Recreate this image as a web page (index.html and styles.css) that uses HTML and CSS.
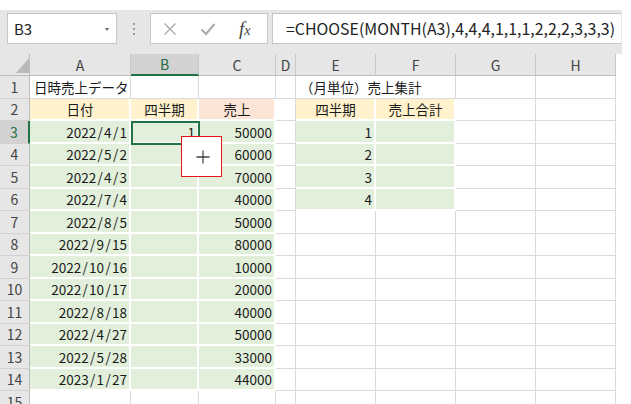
FILE: index.html
```html
<!DOCTYPE html>
<html lang="ja">
<head>
<meta charset="utf-8">
<link rel="stylesheet" href="styles.css">
</head>
<body>
<div class="top"></div>
<div class="fbar">
  <div class="namebox"><span class="nm">B3</span><span class="dd"></span></div>
  <div class="grip"><i></i><i></i><i></i></div>
  <div class="btns">
    <svg class="ic" width="14" height="14" viewBox="0 0 14 14"><path d="M1.5 1.5 L12.5 12.5 M12.5 1.5 L1.5 12.5" stroke="#a9a9a9" stroke-width="1.3" fill="none"/></svg>
    <svg class="ic" width="16" height="14" viewBox="0 0 16 14"><path d="M1.5 7.5 L6 12 L14.5 2" stroke="#a9a9a9" stroke-width="2" fill="none"/></svg>
    <span class="fx">f<span class="fxx">x</span></span>
  </div>
  <div class="formula">=CHOOSE(MONTH(A3),4,4,4,1,1,1,2,2,2,3,3,3)</div>
</div>
<div class="sheet">
  <div class="corner"><svg width="30" height="22" viewBox="0 0 30 22"><path d="M29 4 L29 19 L16 19 Z" fill="#b9b9b9"/></svg></div>
  <div class="h">A</div><div class="h sel">B</div><div class="h">C</div><div class="h">D</div><div class="h">E</div><div class="h">F</div><div class="h">G</div><div class="h">H</div><div class="hx"></div>

  <div class="rh">1</div><div class="c">日時売上データ</div><div class="c"></div><div class="c"></div><div class="c"></div><div class="c nb">（月単位）売上集計</div><div class="c"></div><div class="c"></div><div class="c"></div><div class="x"></div>
  <div class="rh">2</div><div class="c y m">日付</div><div class="c y m">四半期</div><div class="c p m">売上</div><div class="c"></div><div class="c y m">四半期</div><div class="c y m">売上合計</div><div class="c"></div><div class="c"></div><div class="x"></div>
  <div class="rh sel">3</div><div class="c g r">2022<span class="sl">/</span>4<span class="sl">/</span>1</div><div class="c g r">1</div><div class="c g r">50000</div><div class="c"></div><div class="c g r">1</div><div class="c g"></div><div class="c"></div><div class="c"></div><div class="x"></div>
  <div class="rh">4</div><div class="c g r">2022<span class="sl">/</span>5<span class="sl">/</span>2</div><div class="c g r"></div><div class="c g r">60000</div><div class="c"></div><div class="c g r">2</div><div class="c g"></div><div class="c"></div><div class="c"></div><div class="x"></div>
  <div class="rh">5</div><div class="c g r">2022<span class="sl">/</span>4<span class="sl">/</span>3</div><div class="c g r"></div><div class="c g r">70000</div><div class="c"></div><div class="c g r">3</div><div class="c g"></div><div class="c"></div><div class="c"></div><div class="x"></div>
  <div class="rh">6</div><div class="c g r">2022<span class="sl">/</span>7<span class="sl">/</span>4</div><div class="c g r"></div><div class="c g r">40000</div><div class="c"></div><div class="c g r">4</div><div class="c g"></div><div class="c"></div><div class="c"></div><div class="x"></div>
  <div class="rh">7</div><div class="c g r">2022<span class="sl">/</span>8<span class="sl">/</span>5</div><div class="c g r"></div><div class="c g r">50000</div><div class="c"></div><div class="c"></div><div class="c"></div><div class="c"></div><div class="c"></div><div class="x"></div>
  <div class="rh">8</div><div class="c g r">2022<span class="sl">/</span>9<span class="sl">/</span>15</div><div class="c g r"></div><div class="c g r">80000</div><div class="c"></div><div class="c"></div><div class="c"></div><div class="c"></div><div class="c"></div><div class="x"></div>
  <div class="rh">9</div><div class="c g r">2022<span class="sl">/</span>10<span class="sl">/</span>16</div><div class="c g r"></div><div class="c g r">10000</div><div class="c"></div><div class="c"></div><div class="c"></div><div class="c"></div><div class="c"></div><div class="x"></div>
  <div class="rh">10</div><div class="c g r">2022<span class="sl">/</span>10<span class="sl">/</span>17</div><div class="c g r"></div><div class="c g r">20000</div><div class="c"></div><div class="c"></div><div class="c"></div><div class="c"></div><div class="c"></div><div class="x"></div>
  <div class="rh">11</div><div class="c g r">2022<span class="sl">/</span>8<span class="sl">/</span>18</div><div class="c g r"></div><div class="c g r">40000</div><div class="c"></div><div class="c"></div><div class="c"></div><div class="c"></div><div class="c"></div><div class="x"></div>
  <div class="rh">12</div><div class="c g r">2022<span class="sl">/</span>4<span class="sl">/</span>27</div><div class="c g r"></div><div class="c g r">50000</div><div class="c"></div><div class="c"></div><div class="c"></div><div class="c"></div><div class="c"></div><div class="x"></div>
  <div class="rh">13</div><div class="c g r">2022<span class="sl">/</span>5<span class="sl">/</span>28</div><div class="c g r"></div><div class="c g r">33000</div><div class="c"></div><div class="c"></div><div class="c"></div><div class="c"></div><div class="c"></div><div class="x"></div>
  <div class="rh">14</div><div class="c g r">2023<span class="sl">/</span>1<span class="sl">/</span>27</div><div class="c g r"></div><div class="c g r">44000</div><div class="c"></div><div class="c"></div><div class="c"></div><div class="c"></div><div class="c"></div><div class="x"></div>
  <div class="rh">15</div><div class="c"></div><div class="c"></div><div class="c"></div><div class="c"></div><div class="c"></div><div class="c"></div><div class="c"></div><div class="c"></div><div class="x"></div>

  <div class="selbox"></div>
  <div class="popup"><svg width="14" height="14" viewBox="0 0 14 14"><path d="M7 0.5 L7 13.5" stroke="#8c8c8c" stroke-width="2"/><path d="M0.5 7 L13.5 7" stroke="#222" stroke-width="1.3"/></svg></div>
</div>
</body>
</html>
```

FILE: styles.css
```css
html, body {
  margin: 0;
  padding: 0;
}
body {
  width: 631px;
  height: 404px;
  overflow: hidden;
  background: #fff;
  font-family: "Noto Sans CJK JP", "Liberation Sans", sans-serif;
  color: #1a1a1a;
}
.top {
  height: 10px;
}
.fbar {
  width: 622px;
  height: 44px;
  box-sizing: border-box;
  padding-top: 3px;
  background: #e6e6e6;
  display: flex;
  align-items: flex-start;
}
.namebox {
  margin-left: 7px;
  width: 110px;
  height: 31px;
  box-sizing: border-box;
  background: #fff;
  border: 1px solid #c6c6c6;
  display: flex;
  align-items: center;
  justify-content: space-between;
  padding: 0 7px 0 6px;
}
.nm {
  font-size: 15px;
  color: #222;
}
.dd {
  width: 0;
  height: 0;
  border-left: 2.5px solid transparent;
  border-right: 2.5px solid transparent;
  border-top: 3px solid #666;
  margin-top: 1px;
}
.grip {
  width: 33px;
  height: 31px;
  display: flex;
  flex-direction: column;
  align-items: center;
  justify-content: center;
  gap: 3px;
}
.grip i {
  display: block;
  width: 2px;
  height: 2px;
  background: #9c9c9c;
}
.btns {
  width: 118px;
  height: 31px;
  box-sizing: border-box;
  background: #fff;
  border: 1px solid #c6c6c6;
  display: flex;
  align-items: center;
  padding-left: 12px;
}
.btns .ic + .ic {
  margin-left: 23px;
}
.fx {
  margin-left: 23px;
  font-family: "Liberation Serif", serif;
  font-style: italic;
  font-size: 19px;
  color: #444;
  line-height: 1;
}
.fxx {
  font-size: 14px;
}
.formula {
  margin-left: 4px;
  width: 349px;
  height: 31px;
  box-sizing: border-box;
  background: #fff;
  border: 1px solid #c6c6c6;
  border-right: none;
  display: flex;
  align-items: center;
  padding-left: 13px;
  font-size: 15.9px;
  color: #222;
  white-space: nowrap;
}
.sheet {
  position: relative;
  display: grid;
  grid-template-columns: 30px 101px 68px 77px 20px 80px 80px 80px 80px 15px;
  grid-template-rows: 22px repeat(15, 22.5px);
}
.corner {
  background: #e6e6e6;
  border-right: 1px solid #bdbdbd;
  border-bottom: 1px solid #bdbdbd;
  box-sizing: border-box;
  overflow: hidden;
}
.corner svg {
  display: block;
}
.h {
  background: #e6e6e6;
  border-right: 1px solid #c8c8c8;
  border-bottom: 1px solid #bdbdbd;
  box-sizing: border-box;
  display: flex;
  align-items: center;
  justify-content: center;
  font-size: 14px;
  color: #444;
}
.h.sel {
  background: #d2d2d2;
  color: #1e6b41;
  border-bottom: 2px solid #217346;
}
.hx, .x {
  background: #fff;
}
.rh {
  background: #e6e6e6;
  border-right: 1px solid #bdbdbd;
  border-bottom: 1px solid #d2d2d2;
  box-sizing: border-box;
  display: flex;
  align-items: center;
  justify-content: center;
  font-size: 14px;
  color: #444;
}
.rh.sel {
  background: #d2d2d2;
  color: #217346;
  border-right: 2px solid #217346;
}
.c {
  border-right: 1px solid #dadada;
  border-bottom: 1px solid #dadada;
  box-sizing: border-box;
  display: flex;
  align-items: center;
  padding: 1px 3px 0 4px;
  font-size: 13.5px;
  white-space: nowrap;
  min-width: 0;
}
.sl {
  margin: 0 1.3px;
}
.c.nb {
  border-right-color: transparent;
}
.c.g {
  background: #e2efda;
  border-right: 2px solid #fff;
  border-bottom: 2px solid #fff;
}
.c.y {
  background: #fff2cc;
  border-right: 2px solid #fff;
  border-bottom: 2px solid #fff;
}
.c.p {
  background: #fce4d6;
  border-right: 2px solid #fff;
  border-bottom: 2px solid #fff;
}
.c.r {
  justify-content: flex-end;
  padding-right: 2px;
}
.c.m {
  justify-content: center;
}
.selbox {
  position: absolute;
  left: 131px;
  top: 67px;
  width: 69px;
  height: 24px;
  box-sizing: border-box;
  border: 2px solid #217346;
}
.popup {
  position: absolute;
  left: 181px;
  top: 82px;
  width: 41px;
  height: 41px;
  box-sizing: border-box;
  background: #fff;
  border: 1.5px solid #e8141b;
  display: flex;
  align-items: center;
  justify-content: center;
  padding-left: 2px;
  padding-top: 1px;
}
.popup svg {
  display: block;
}
```
